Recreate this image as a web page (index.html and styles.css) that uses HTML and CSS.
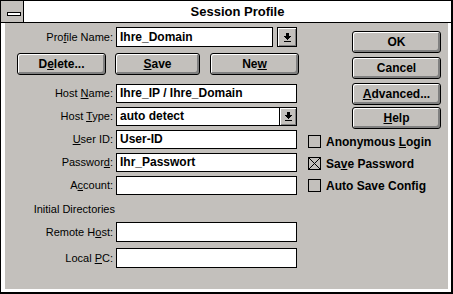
FILE: index.html
```html
<!DOCTYPE html>
<html>
<head>
<meta charset="utf-8">
<title>Session Profile</title>
<link rel="stylesheet" href="styles.css">
</head>
<body>
<div class="window">
  <div class="titlebar">
    <div class="sysmenu"><span class="sysbar"></span></div>
    <div class="title">Session Profile</div>
  </div>
  <div class="frame">
    <div class="left">
      <div class="row row-profile">
        <span class="lbl">Pro<u>f</u>ile Name:</span>
        <div class="field field-short">Ihre_Domain</div>
        <div class="dropbtn">
          <svg class="arrow" width="7" height="9" viewBox="0 0 7 9" shape-rendering="crispEdges"><rect x="2" y="0" width="3" height="3"/><rect x="0" y="3" width="7" height="1"/><rect x="1" y="4" width="5" height="1"/><rect x="2" y="5" width="3" height="1"/><rect x="3" y="6" width="1" height="1"/><rect x="0" y="8" width="7" height="1"/></svg>
        </div>
      </div>
      <div class="btnrow">
        <button class="btn btn-del">D<u>e</u>lete...</button>
        <button class="btn btn-save"><u>S</u>ave</button>
        <button class="btn btn-new">Ne<u>w</u></button>
      </div>
      <div class="fields">
        <div class="row"><span class="lbl">Host <u>N</u>ame:</span><div class="field">Ihre_IP / Ihre_Domain</div></div>
        <div class="row"><span class="lbl">Host <u>T</u>ype:</span><div class="field combo"><span class="combo-text">auto detect</span><span class="combo-btn"><svg class="arrow" width="7" height="9" viewBox="0 0 7 9" shape-rendering="crispEdges"><rect x="2" y="0" width="3" height="3"/><rect x="0" y="3" width="7" height="1"/><rect x="1" y="4" width="5" height="1"/><rect x="2" y="5" width="3" height="1"/><rect x="3" y="6" width="1" height="1"/><rect x="0" y="8" width="7" height="1"/></svg></span></div></div>
        <div class="row"><span class="lbl"><u>U</u>ser ID:</span><div class="field">User-ID</div></div>
        <div class="row"><span class="lbl">Passwor<u>d</u>:</span><div class="field">Ihr_Passwort</div></div>
        <div class="row"><span class="lbl">A<u>c</u>count:</span><div class="field"></div></div>
      </div>
      <div class="section"><span class="lbl">Initial Directories</span></div>
      <div class="fields fields-dirs">
        <div class="row row-tall"><span class="lbl">Remote H<u>o</u>st:</span><div class="field"></div></div>
        <div class="row row-tall"><span class="lbl">Local <u>P</u>C:</span><div class="field"></div></div>
      </div>
    </div>
    <div class="right">
      <div class="cmds">
        <button class="btn cmd">OK</button>
        <button class="btn cmd">Cancel</button>
        <button class="btn cmd"><u>A</u>dvanced...</button>
        <button class="btn cmd cmd-help"><u>H</u>elp</button>
      </div>
      <div class="checks">
        <div class="chk"><span class="box"></span><span>Anonymous <u>L</u>ogin</span></div>
        <div class="chk"><span class="box"><svg width="11" height="11" viewBox="0 0 11 11"><path d="M0 0L11 11M11 0L0 11" stroke="#000" stroke-width="1"/></svg></span><span>Sa<u>v</u>e Password</span></div>
        <div class="chk"><span class="box"></span><span>Auto Save Config</span></div>
      </div>
    </div>
  </div>
</div>
</body>
</html>
```

FILE: styles.css
```css
html, body {
  margin: 0;
  padding: 0;
  background: #fff;
}

body {
  font-family: "Liberation Sans", Arial, sans-serif;
  color: #000;
}

.window {
  width: 453px;
  height: 294px;
  box-sizing: border-box;
  border-style: solid;
  border-color: #000;
  border-width: 1px 2px 2px 1px;
  display: flex;
  flex-direction: column;
}

.titlebar {
  height: 21px;
  border-bottom: 1px solid #000;
  display: flex;
  background: #fff;
  flex: none;
}

.sysmenu {
  background: #c3c0bc;
  border-right: 1px solid #000;
  box-sizing: content-box;
  padding: 11px 0 0 6px;
  width: 16px;
}

.sysbar {
  display: block;
  width: 14px;
  height: 4px;
  box-sizing: border-box;
  border: 1px solid #000;
  background: #fff;
}

.title {
  flex: 1;
  text-align: center;
  font-weight: bold;
  font-size: 13px;
  line-height: 21px;
}

.frame {
  flex: 1;
  display: flex;
  background: #c3c0bc;
  border-style: solid;
  border-color: #fff;
  border-width: 0 3px 3px 4px;
}

.left {
  width: 294px;
  padding-top: 4px;
  display: flex;
  flex-direction: column;
}

.row {
  display: flex;
  align-items: center;
  height: 19px;
}

.row-profile {
  height: 20px;
}

.row-tall {
  height: 20px;
}

.lbl {
  width: 108px;
  text-align: right;
  font-size: 11px;
  line-height: 13px;
  white-space: nowrap;
  flex: none;
}

.field {
  width: 181px;
  height: 100%;
  margin-left: 3px;
  box-sizing: border-box;
  border: 1px solid #000;
  background: #fff;
  font-weight: bold;
  font-size: 12px;
  line-height: 17px;
  padding-left: 3px;
  white-space: nowrap;
  overflow: hidden;
}

.row-profile .field {
  line-height: 18px;
}

.field-short {
  width: 157px;
}

.dropbtn {
  width: 20px;
  height: 20px;
  margin-left: 4px;
  box-sizing: border-box;
  border: 1px solid #000;
  background: #c3c0bc;
  box-shadow: inset 1px 1px 0 #fff, inset -1px -1px 0 #808080;
  display: flex;
  align-items: center;
  justify-content: center;
}

.arrow {
  display: block;
  fill: #000;
}

.combo {
  display: flex;
  padding-right: 0;
}

.combo-text {
  flex: 1;
}

.combo-btn {
  width: 16px;
  height: 17px;
  border-left: 1px solid #000;
  background: #c3c0bc;
  box-shadow: inset 1px 1px 0 #fff, inset -1px -1px 0 #808080;
  display: flex;
  align-items: center;
  justify-content: center;
}

.btnrow {
  display: flex;
  margin-top: 6px;
  padding-left: 12px;
}

.btn {
  height: 22px;
  box-sizing: border-box;
  border: 1px solid #000;
  border-radius: 3px;
  background: #c3c0bc;
  box-shadow: inset 1px 1px 0 #fff, inset -2px -2px 0 #808080;
  font-family: "Liberation Sans", Arial, sans-serif;
  font-weight: bold;
  font-size: 12px;
  color: #000;
  padding: 0 0 1px 0;
  margin: 0;
  display: flex;
  align-items: center;
  justify-content: center;
}

.btn-del {
  width: 89px;
}

.btn-save {
  width: 85px;
  margin-left: 9px;
}

.btn-new {
  width: 89px;
  margin-left: 10px;
}

.fields {
  display: flex;
  flex-direction: column;
  gap: 4px;
  margin-top: 9px;
}

.section {
  display: flex;
  margin-top: 8px;
  height: 13px;
}

.section .lbl {
  width: 110px;
}

.fields-dirs {
  margin-top: 6px;
  gap: 6px;
}

.right {
  flex: 1;
  padding-top: 8px;
  display: flex;
  flex-direction: column;
}

.cmds {
  display: flex;
  flex-direction: column;
  gap: 4px;
  padding-left: 53px;
}

.cmd {
  width: 89px;
}

.cmds .cmd-help {
  margin-top: -2px;
}

.checks {
  display: flex;
  flex-direction: column;
  gap: 1px;
  margin-top: 2px;
  padding-left: 9px;
}

.chk {
  display: flex;
  align-items: center;
  height: 21px;
  font-weight: bold;
  font-size: 12px;
  white-space: nowrap;
}

.box {
  width: 13px;
  height: 13px;
  box-sizing: border-box;
  border: 1px solid #000;
  margin-right: 5px;
  flex: none;
  display: flex;
}

.box svg {
  display: block;
}
```
